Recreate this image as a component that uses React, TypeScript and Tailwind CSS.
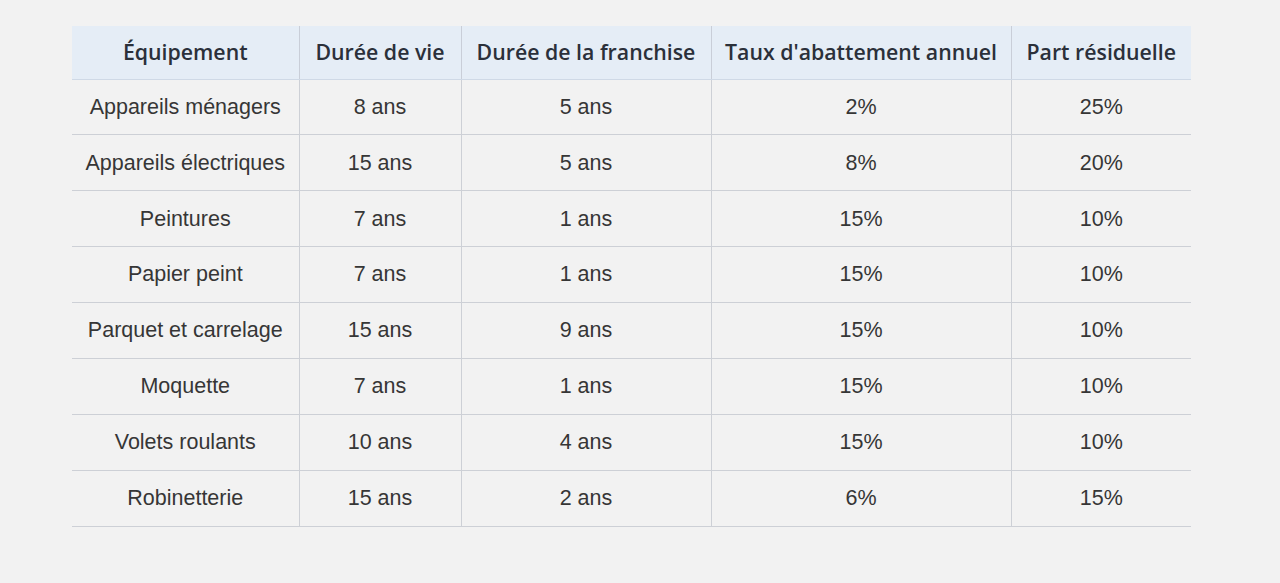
const HEADERS = [
  "Équipement",
  "Durée de vie",
  "Durée de la franchise",
  "Taux d'abattement annuel",
  "Part résiduelle",
];

const WIDTHS = ["w-[227px]", "w-[162px]", "w-[250px]", "w-[300px]", "w-[180px]"];

const ROWS: string[][] = [
  ["Appareils ménagers", "8 ans", "5 ans", "2%", "25%"],
  ["Appareils électriques", "15 ans", "5 ans", "8%", "20%"],
  ["Peintures", "7 ans", "1 ans", "15%", "10%"],
  ["Papier peint", "7 ans", "1 ans", "15%", "10%"],
  ["Parquet et carrelage", "15 ans", "9 ans", "15%", "10%"],
  ["Moquette", "7 ans", "1 ans", "15%", "10%"],
  ["Volets roulants", "10 ans", "4 ans", "15%", "10%"],
  ["Robinetterie", "15 ans", "2 ans", "6%", "15%"],
];

export default function App() {
  return (
    <div className="min-h-[583px] w-full bg-[#f2f2f2] pt-[26px] pl-[72px]">
      <table className="border-collapse table-fixed w-[1119px]">
        <thead>
          <tr className="h-[53px] bg-[#e5edf6]">
            {HEADERS.map((h, i) => (
              <th
                key={h}
                className={`${WIDTHS[i]} border-b border-[#cfd9e6] ${
                  i > 0 ? "border-l border-l-[#c9ced8]" : ""
                } text-center text-[21.3px] font-semibold text-[#2b303a] font-['Open_Sans',sans-serif] tracking-[0px]`}
              >
                {h}
              </th>
            ))}
          </tr>
        </thead>
        <tbody>
          {ROWS.map((row) => (
            <tr key={row[0]} className="h-[55.9px]">
              {row.map((cell, i) => (
                <td
                  key={i}
                  className={`border-b border-[#cdd0d6] ${
                    i > 0 ? "border-l border-l-[#cdd0d6]" : ""
                  } text-center text-[21.5px] text-[#363636] font-['Liberation_Sans',Arial,sans-serif]`}
                >
                  {cell}
                </td>
              ))}
            </tr>
          ))}
        </tbody>
      </table>
    </div>
  );
}
